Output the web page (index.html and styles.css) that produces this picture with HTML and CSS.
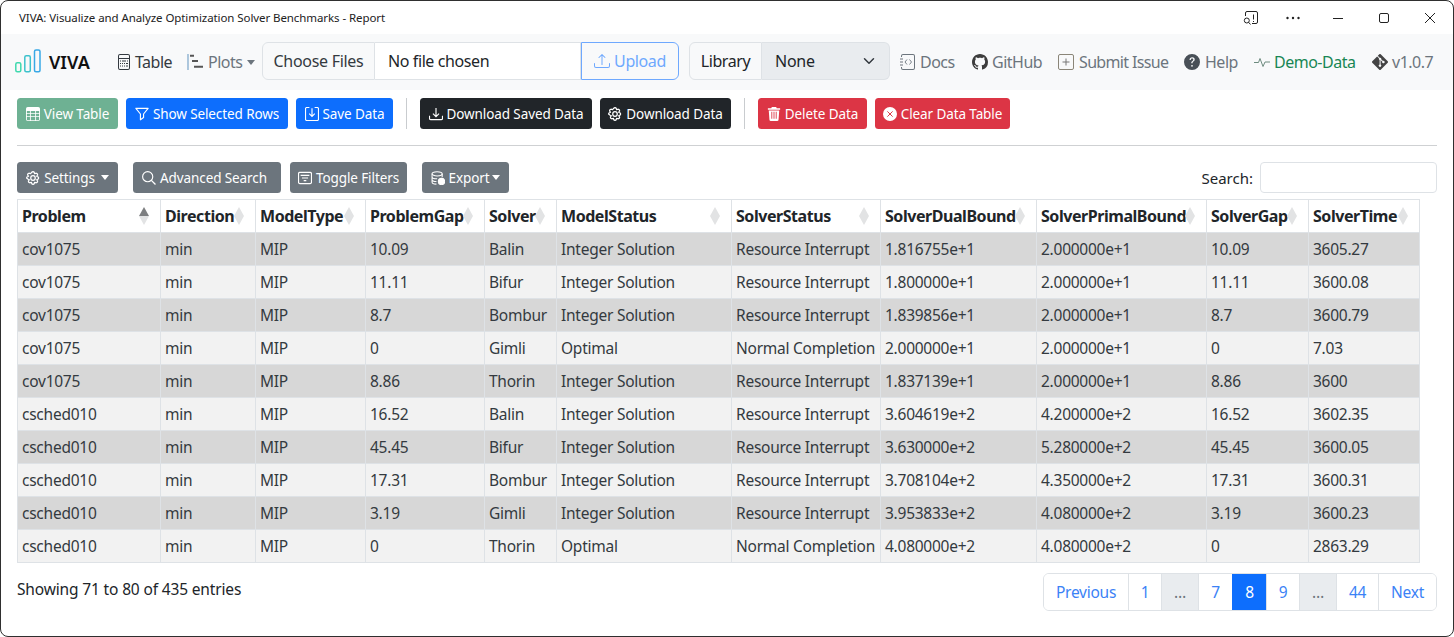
FILE: index.html
```html
<!DOCTYPE html>
<html lang="en">
<head>
<meta charset="utf-8">
<title>VIVA: Visualize and Analyze Optimization Solver Benchmarks - Report</title>
<link rel="stylesheet" href="styles.css">
</head>
<body>
<div class="window">
  <header class="titlebar">
    <span class="title">VIVA: Visualize and Analyze Optimization Solver Benchmarks - Report</span>
    <div class="winctl">
      <svg class="wc" viewBox="0 0 16 16" fill="none" stroke="#222" stroke-width="1"><path d="M2.5 6V3a1.5 1.5 0 0 1 1.5-1.5h9A1.5 1.5 0 0 1 14.500 3v9a1.500 1.500 0 0 1-1.500 1.500H9"/><path d="M10.500 4.500v5M10.500 11v1"/><circle cx="3.800" cy="10.500" r="2.500"/><path d="M5.600 12.300 7.500 14.500"/></svg>
      <svg class="wc" viewBox="0 0 16 16" fill="#222"><circle cx="2.500" cy="8" r="1.200"/><circle cx="8" cy="8" r="1.200"/><circle cx="13.500" cy="8" r="1.200"/></svg>
      <svg class="wc" viewBox="0 0 16 16" stroke="#222" fill="none"><path d="M3 8.500h10"/></svg>
      <svg class="wc" viewBox="0 0 16 16" stroke="#222" fill="none"><rect x="3.500" y="3.500" width="9" height="9" rx="1.500"/></svg>
      <svg class="wc" viewBox="0 0 16 16" stroke="#222" fill="none"><path d="M3 3l10 10M13 3 3 13"/></svg>
    </div>
  </header>

  <nav class="navbar">
    <a class="brand">
      <svg class="logo" viewBox="0 0 27 26" fill="none" stroke-width="1.500">
        <defs><linearGradient id="lg" x1="0" y1="0" x2="1" y2="0"><stop offset="0" stop-color="#3fe0a8"/><stop offset="1" stop-color="#35a4ea"/></linearGradient></defs>
        <rect x="1.800" y="13.800" width="5" height="9" rx="1.500" stroke="#3fd9ae"/>
        <rect x="10.800" y="6.800" width="5.500" height="16" rx="1.500" stroke="#3cc2cc"/>
        <rect x="20.500" y="1" width="5.500" height="21.800" rx="1.500" stroke="#38a8e6"/>
        <path d="M1 25.200h25.500" stroke="url(#lg)" stroke-width="1.600"/>
      </svg>
      <span class="brandname">VIVA</span>
    </a>
    <a class="navlink dark nav-table">
      <svg class="ic" viewBox="0 0 16 16" fill="currentColor"><path d="M4 0a2 2 0 0 0-2 2v12a2 2 0 0 0 2 2h8a2 2 0 0 0 2-2V2a2 2 0 0 0-2-2H4zm0 1h8a1 1 0 0 1 1 1v2H3V2a1 1 0 0 1 1-1zM3 5h10v9a1 1 0 0 1-1 1H4a1 1 0 0 1-1-1V5zm2 1.500H4v1h1zm1 0v1h4v-1zm5 0v1h1v-1zM4 9v1h1V9zm2 0v1h1V9zm2 0v1h1V9zm2 0v1h2V9zm-6 2.500v1h1v-1zm2 0v1h1v-1zm2 0v1h1v-1zm2 0v1h2v-1z"/></svg>
      Table
    </a>
    <a class="navlink muted nav-plots">
      <svg class="ic" viewBox="0 0 16 16"><path d="M1 0v16" stroke="#7ba4c9" stroke-width="1.200"/><path d="M3 1.700h4M5 7h6M7 12.800h9" stroke="#555" stroke-width="1.900"/></svg>
      Plots<span class="caret"></span>
    </a>
    <form class="filegroup">
      <span class="choose">Choose Files</span>
      <span class="nofile">No file chosen</span>
      <span class="upload">
        <svg class="ic" viewBox="0 0 16 16" fill="currentColor"><path d="M.5 9.900a.5.5 0 0 1 .5.500v2.500a1 1 0 0 0 1 1h12a1 1 0 0 0 1-1v-2.500a.5.5 0 0 1 1 0v2.500a2 2 0 0 1-2 2H2a2 2 0 0 1-2-2v-2.500a.5.5 0 0 1 .5-.5z"/><path d="M7.650 1.150a.5.5 0 0 1 .7 0l3 3a.5.5 0 0 1-.7.7L8.500 2.700V11.500a.5.5 0 0 1-1 0V2.700L5.350 4.850a.5.5 0 1 1-.7-.7l3-3z"/></svg>
        Upload
      </span>
    </form>
    <div class="libgroup">
      <span class="liblabel">Library</span>
      <span class="libselect">None
        <svg class="chev" viewBox="0 0 16 16" fill="none" stroke="#343a40" stroke-width="2" stroke-linecap="round" stroke-linejoin="round"><path d="m2 5 6 6 6-6"/></svg>
      </span>
    </div>
    <a class="navlink muted nav-docs">
      <svg class="ic" viewBox="0 0 16 16" fill="currentColor"><path d="M3 0h10a2 2 0 0 1 2 2v12a2 2 0 0 1-2 2H3a2 2 0 0 1-2-2v-1h1v1a1 1 0 0 0 1 1h10a1 1 0 0 0 1-1V2a1 1 0 0 0-1-1H3a1 1 0 0 0-1 1v1H1V2a2 2 0 0 1 2-2z"/><path d="M0 4.500h3v1H0zM0 7.500h3v1H0zM0 10.500h3v1H0z"/><path d="m7 5.500-2 2.500 2 2.500M9.500 5.500l2 2.500-2 2.500" fill="none" stroke="currentColor" stroke-width=".9"/></svg>
      Docs
    </a>
    <a class="navlink muted nav-gh">
      <svg class="ic" viewBox="0 0 16 16" fill="#3d3d3d"><path d="M8 0C3.580 0 0 3.580 0 8c0 3.540 2.290 6.530 5.470 7.590.4.070.55-.17.55-.38 0-.19-.01-.82-.01-1.490-2.010.37-2.530-.49-2.690-.94-.09-.23-.48-.94-.82-1.130-.28-.15-.68-.52-.01-.53.630-.01 1.080.58 1.230.82.720 1.210 1.870.87 2.330.66.070-.52.280-.87.510-1.070-1.780-.2-3.640-.89-3.640-3.950 0-.87.310-1.590.820-2.150-.08-.2-.36-1.020.08-2.120 0 0 .67-.21 2.200.82.640-.18 1.320-.27 2-.27.68 0 1.360.09 2 .27 1.530-1.040 2.200-.82 2.200-.82.440 1.100.16 1.920.08 2.120.51.560.82 1.270.82 2.150 0 3.070-1.870 3.750-3.650 3.950.290.250.540.730.540 1.480 0 1.070-.01 1.930-.01 2.200 0 .21.150.46.550.38A8.010 8.010 0 0 0 16 8c0-4.420-3.580-8-8-8z"/></svg>
      GitHub
    </a>
    <a class="navlink muted nav-issue">
      <svg class="ic" viewBox="0 0 16 16" fill="none" stroke="#777"><rect x=".5" y=".5" width="15" height="15" rx="1.500" stroke="#8a8578"/><path d="M8 4.500v7M4.500 8h7"/></svg>
      Submit Issue
    </a>
    <a class="navlink muted nav-help">
      <svg class="ic" viewBox="0 0 16 16" fill="#495057"><path d="M16 8A8 8 0 1 1 0 8a8 8 0 0 1 16 0zM5.500 5.900h1.300c.1-.8.600-1.300 1.300-1.300.7 0 1.200.4 1.200 1 0 .5-.2.800-.9 1.300-.8.500-1.100 1-1.100 1.800v.5h1.300v-.3c0-.6.200-.9.900-1.400.7-.500 1.200-1.100 1.200-2 0-1.300-1-2.200-2.500-2.200-1.600 0-2.600.9-2.700 2.600zM8 12.700a.9.900 0 1 0 0-1.800.9.900 0 0 0 0 1.800z" fill-rule="evenodd"/></svg>
      Help
    </a>
    <a class="navlink teal nav-demo">
      <svg class="ic" viewBox="0 0 16 16" fill="none" stroke="#6c8a7e" stroke-width="1"><path d="M0 8.500h4.500l1.500-4 3 8 2-4.500h5"/></svg>
      Demo-Data
    </a>
    <a class="navlink muted nav-ver">
      <svg class="ic" viewBox="0 0 16 16" fill="#444"><path d="M15.700 7.300 8.700.3a1 1 0 0 0-1.400 0L5.800 1.800l1.900 1.900a1.200 1.200 0 0 1 1.500 1.500l1.800 1.800a1.200 1.200 0 1 1-.7.700L8.600 6.100v4.500a1.200 1.200 0 1 1-1-.1V5.900a1.200 1.200 0 0 1-.6-1.600L5.100 2.500.3 7.300a1 1 0 0 0 0 1.400l7 7a1 1 0 0 0 1.400 0l7-7a1 1 0 0 0 0-1.400z"/></svg>
      v1.0.7
    </a>
  </nav>

  <main class="content">
    <div class="toolbar">
      <button class="btn green w-view"><svg class="bi" viewBox="0 0 16 16" fill="currentColor"><path d="M0 2a2 2 0 0 1 2-2h12a2 2 0 0 1 2 2v12a2 2 0 0 1-2 2H2a2 2 0 0 1-2-2V2zm1 2.500V7h3.500V4.500H1zm4.500 0V7h5V4.500h-5zm6 0V7H15V4.500h-3.500zM1 8v2.500h3.500V8H1zm4.500 0v2.500h5V8h-5zm6 0v2.500H15V8h-3.500zM1 11.500V14a1 1 0 0 0 1 1h2.500v-3.500H1zm4.500 0V15h5v-3.500h-5zm6 0V15H14a1 1 0 0 0 1-1v-2.500h-3.500z"/></svg>View Table</button>
      <button class="btn blue w-show"><svg class="bi" viewBox="0 0 16 16" fill="none" stroke="currentColor" stroke-width="1.300"><path d="M1 1.500h14l-5.200 6.500v4l-3.600 2.600V8z" stroke-linejoin="round"/></svg>Show Selected Rows</button>
      <button class="btn blue w-save"><svg class="bi" viewBox="0 0 16 16" fill="none" stroke="currentColor" stroke-width="1.300"><path d="M5 .6H2a1.400 1.400 0 0 0-1.400 1.400v12A1.400 1.400 0 0 0 2 15.400h12a1.400 1.400 0 0 0 1.400-1.400V2A1.400 1.400 0 0 0 14 .6h-3"/><path d="M8 1.500v9M4.800 7.500 8 10.700l3.200-3.200"/></svg>Save Data</button>
      <span class="vr"></span>
      <button class="btn black w-dsaved"><svg class="bi" viewBox="0 0 16 16" fill="none" stroke="currentColor" stroke-width="1.300"><path d="M.6 10v3a1.500 1.500 0 0 0 1.500 1.500h11.800a1.500 1.500 0 0 0 1.500-1.500v-3"/><path d="M8 1v10M4.500 7.500 8 11l3.500-3.500"/></svg>Download Saved Data</button>
      <button class="btn black w-ddata"><svg class="bi" viewBox="0 0 16 16" fill="none" stroke="currentColor" stroke-width="1.400"><circle cx="8" cy="8" r="2.600"/><path d="M6.700 1.300 8 .7l1.300.6.600 1.800 1.800-.6 1.200.7.400 1.300-1.100 1.500 1.800.8.400 1.200-.4 1.200-1.800.8 1.100 1.500-.4 1.300-1.200.7-1.800-.6-.6 1.800-1.300.6-1.300-.6-.6-1.800-1.800.6-1.200-.7-.4-1.300 1.100-1.500-1.800-.8L.7 8l.4-1.200 1.800-.8-1.100-1.500.4-1.300 1.200-.7 1.800.6z" stroke-linejoin="round"/></svg>Download Data</button>
      <span class="vr"></span>
      <button class="btn red w-del"><svg class="bi" viewBox="0 0 16 16" fill="currentColor"><path d="M5.500 0h5l.6 1.500H15V3H1V1.500h3.900zM2 4h12l-.8 10.500A1.600 1.600 0 0 1 11.600 16H4.400a1.600 1.600 0 0 1-1.600-1.500zm3 1.500v8h1v-8zm2.500 0v8h1v-8zm2.500 0v8h1v-8z"/></svg>Delete Data</button>
      <button class="btn red w-clear"><svg class="bi" viewBox="0 0 16 16"><circle cx="8" cy="8" r="8" fill="#fff"/><path d="M5 5l6 6M11 5l-6 6" stroke="#dc3545" stroke-width="1.100"/></svg>Clear Data Table</button>
    </div>

    <hr class="rule">

    <div class="dtbar">
      <button class="btn gray w-set"><svg class="bi" viewBox="0 0 16 16" fill="none" stroke="currentColor" stroke-width="1.400"><circle cx="8" cy="8" r="2.600"/><path d="M6.700 1.300 8 .7l1.300.6.600 1.800 1.800-.6 1.200.7.400 1.300-1.100 1.500 1.800.8.400 1.200-.4 1.200-1.800.8 1.100 1.500-.4 1.300-1.200.7-1.800-.6-.6 1.800-1.300.6-1.300-.6-.6-1.800-1.800.6-1.200-.7-.4-1.300 1.100-1.500-1.800-.8L.7 8l.4-1.200 1.800-.8-1.100-1.500.4-1.300 1.200-.7 1.800.6z" stroke-linejoin="round"/></svg>Settings<span class="caret"></span></button>
      <button class="btn gray w-adv"><svg class="bi" viewBox="0 0 16 16" fill="none" stroke="currentColor" stroke-width="1.300"><circle cx="6.500" cy="6.500" r="5.800"/><path d="m10.700 10.700 4.700 4.700" stroke-width="1.500"/></svg>Advanced Search</button>
      <button class="btn gray w-tog"><svg class="bi" viewBox="0 0 16 16" fill="none" stroke="currentColor" stroke-width="1.300"><rect x=".6" y="1.600" width="14.800" height="12.800" rx="1.500"/><path d="M3 5h10M4.500 8h7M6.500 11h3"/></svg>Toggle Filters</button>
      <button class="btn gray w-exp"><svg class="bi" viewBox="0 0 16 16" fill="none" stroke="currentColor" stroke-width="1.200"><ellipse cx="7" cy="3.200" rx="5.800" ry="2.400"/><path d="M1.200 3.200v9.400c0 1.300 2.500 2.400 5 2.400M12.800 3.200V7M1.200 6.500c0 1.300 2.600 2.400 5.800 2.400M1.200 9.700c0 1.300 2.500 2.300 5 2.300"/><circle cx="12" cy="12" r="3.600" fill="currentColor"/></svg>Export<span class="caret tight"></span></button>
      <label class="search">Search:<input class="searchbox" type="text"></label>
    </div>

    <table class="data">
      <colgroup>
        <col class="c1"><col class="c2"><col class="c3"><col class="c4"><col class="c5"><col class="c6"><col class="c7"><col class="c8"><col class="c9"><col class="c10"><col class="c11">
      </colgroup>
      <thead>
        <tr><th class="asc">Problem</th><th>Direction</th><th>ModelType</th><th>ProblemGap</th><th>Solver</th><th>ModelStatus</th><th>SolverStatus</th><th>SolverDualBound</th><th>SolverPrimalBound</th><th>SolverGap</th><th>SolverTime</th></tr>
      </thead>
      <tbody>
        <tr><td>cov1075</td><td>min</td><td>MIP</td><td>10.09</td><td>Balin</td><td>Integer Solution</td><td>Resource Interrupt</td><td>1.816755e+1</td><td>2.000000e+1</td><td>10.09</td><td>3605.27</td></tr>
        <tr><td>cov1075</td><td>min</td><td>MIP</td><td>11.11</td><td>Bifur</td><td>Integer Solution</td><td>Resource Interrupt</td><td>1.800000e+1</td><td>2.000000e+1</td><td>11.11</td><td>3600.08</td></tr>
        <tr><td>cov1075</td><td>min</td><td>MIP</td><td>8.7</td><td>Bombur</td><td>Integer Solution</td><td>Resource Interrupt</td><td>1.839856e+1</td><td>2.000000e+1</td><td>8.7</td><td>3600.79</td></tr>
        <tr><td>cov1075</td><td>min</td><td>MIP</td><td>0</td><td>Gimli</td><td>Optimal</td><td>Normal Completion</td><td>2.000000e+1</td><td>2.000000e+1</td><td>0</td><td>7.03</td></tr>
        <tr><td>cov1075</td><td>min</td><td>MIP</td><td>8.86</td><td>Thorin</td><td>Integer Solution</td><td>Resource Interrupt</td><td>1.837139e+1</td><td>2.000000e+1</td><td>8.86</td><td>3600</td></tr>
        <tr><td>csched010</td><td>min</td><td>MIP</td><td>16.52</td><td>Balin</td><td>Integer Solution</td><td>Resource Interrupt</td><td>3.604619e+2</td><td>4.200000e+2</td><td>16.52</td><td>3602.35</td></tr>
        <tr><td>csched010</td><td>min</td><td>MIP</td><td>45.45</td><td>Bifur</td><td>Integer Solution</td><td>Resource Interrupt</td><td>3.630000e+2</td><td>5.280000e+2</td><td>45.45</td><td>3600.05</td></tr>
        <tr><td>csched010</td><td>min</td><td>MIP</td><td>17.31</td><td>Bombur</td><td>Integer Solution</td><td>Resource Interrupt</td><td>3.708104e+2</td><td>4.350000e+2</td><td>17.31</td><td>3600.31</td></tr>
        <tr><td>csched010</td><td>min</td><td>MIP</td><td>3.19</td><td>Gimli</td><td>Integer Solution</td><td>Resource Interrupt</td><td>3.953833e+2</td><td>4.080000e+2</td><td>3.19</td><td>3600.23</td></tr>
        <tr><td>csched010</td><td>min</td><td>MIP</td><td>0</td><td>Thorin</td><td>Optimal</td><td>Normal Completion</td><td>4.080000e+2</td><td>4.080000e+2</td><td>0</td><td>2863.29</td></tr>
      </tbody>
    </table>

    <div class="dtfoot">
      <div class="info">Showing 71 to 80 of 435 entries</div>
      <ul class="pager">
        <li class="p-prev">Previous</li><li class="p-1">1</li><li class="p-dots">…</li><li class="p-7">7</li><li class="p-7 on">8</li><li class="p-1">9</li><li class="p-dots">…</li><li class="p-44">44</li><li class="p-next">Next</li>
      </ul>
    </div>
  </main>
</div>
</body>
</html>
```
FILE: styles.css
```css
* { box-sizing: border-box; }
html, body { margin: 0; padding: 0; background: #fff; }
body {
  font-family: "Noto Sans", "Open Sans", "Liberation Sans", sans-serif;
  font-size: 16px;
  color: #212529;
  letter-spacing: -0.25px;
}
.window {
  width: 1454px;
  height: 637px;
  border: 1px solid #2f2f2f;
  border-radius: 8px;
  overflow: hidden;
  background: #fff;
}
.titlebar {
  height: 33px;
  display: flex;
  align-items: center;
  justify-content: space-between;
  padding-left: 18px;
}
.title { font-size: 11.5px; letter-spacing: -0.08px; color: #222; }
.winctl { display: flex; align-items: center; gap: 26px; padding-right: 15px; }
.wc { width: 16px; height: 16px; display: block; }
.winctl .wc:nth-child(n+3) { margin-left: 4px; }
.winctl .wc:nth-child(3) { margin-left: 3px; }

.navbar {
  height: 56px;
  background: #f8f9fa;
  display: flex;
  align-items: center;
  padding-left: 13px;
}
.brand { display: flex; align-items: center; width: 102px; }
.logo { width: 27px; height: 26px; margin-right: 8px; }
.brandname { font-size: 18px; font-weight: 600; color: #111; letter-spacing: 0; }
.navlink { display: flex; align-items: center; height: 24px; white-space: nowrap; letter-spacing: -0.5px; }
.ic { width: 16px; height: 16px; margin-right: 4px; flex: none; }
.dark { color: #343a40; }
.muted { color: #6c757d; }
.teal { color: #198754; }
.nav-table { width: 71px; }
.nav-table .ic { margin-right: 3px; }
.nav-plots { width: 75px; }
.nav-plots .ic { margin-right: 5px; }
.caret {
  display: inline-block;
  margin-left: 5px;
  border-top: 5px solid currentColor;
  border-left: 4px solid transparent;
  border-right: 4px solid transparent;
}
.caret.tight { margin-left: 3px; }
.filegroup {
  display: flex;
  width: 417px;
  height: 38px;
  margin: 0 0 2px;
  background: #fff;
  border-radius: 6px;
}
.choose, .nofile, .liblabel, .libselect { padding-bottom: 1px; }
.choose {
  width: 113px;
  background: #f8f9fa;
  border: 1px solid #dee2e6;
  border-radius: 6px 0 0 6px;
  display: flex; align-items: center; justify-content: center;
  color: #343a40;
  letter-spacing: -0.3px;
}
.nofile {
  width: 206px;
  border: 1px solid #dee2e6;
  border-left: 0;
  display: flex; align-items: center;
  padding-left: 13px;
  color: #212529;
  letter-spacing: -0.4px;
}
.upload {
  width: 98px;
  background: #f8f9fa;
  border: 1px solid #6ea8fe;
  border-radius: 0 6px 6px 0;
  display: flex; align-items: center; justify-content: center;
  color: #6ea8fe;
  letter-spacing: -0.4px;
}
.libgroup { display: flex; width: 201px; height: 38px; margin: 0 10px 2px; }
.liblabel {
  width: 73px;
  background: #f8f9fa;
  border: 1px solid #dee2e6;
  border-radius: 6px 0 0 6px;
  display: flex; align-items: center; justify-content: center;
  letter-spacing: -0.4px;
}
.libselect {
  width: 128px;
  background: #e9ecef;
  border: 1px solid #dee2e6;
  border-left: 0;
  border-radius: 0 6px 6px 0;
  display: flex; align-items: center; justify-content: space-between;
  padding: 0 14px 1px 13px;
}
.chev { width: 12px; height: 12px; }
.nav-docs { width: 72px; }
.nav-gh { width: 86px; }
.nav-issue { width: 126px; letter-spacing: -0.65px; }
.nav-issue .ic, .nav-help .ic { margin-right: 5px; }
.nav-help { width: 70px; }
.nav-demo { width: 118px; }
.nav-ver { width: 64px; }

.content { padding: 8px 16px 0; }
.toolbar { display: flex; align-items: center; height: 31px; }
.btn {
  display: inline-flex;
  align-items: center;
  justify-content: center;
  height: 31px;
  padding: 0;
  border: 0;
  border-radius: 3.500px;
  font-family: inherit;
  font-size: 13.500px;
  letter-spacing: -0.1px;
  color: #fff;
  white-space: nowrap;
  margin-right: 8px;
}
.bi { width: 14px; height: 14px; margin-right: 4px; flex: none; }
.green { background: #6eb193; }
.blue { background: #0d6efd; }
.black { background: #212529; }
.red { background: #dc3545; }
.gray { background: #6c757d; }
.w-view { width: 101px; }
.w-show { width: 162px; }
.w-save { width: 97px; margin-right: 13px; }
.w-dsaved { width: 172px; }
.w-ddata { width: 131px; margin-right: 13px; }
.w-del { width: 109px; }
.w-clear { width: 135px; }
.vr { width: 1px; height: 31px; background: #c9cccf; margin-right: 13px; }
.rule { height: 1px; border: 0; background: #cfd1d3; margin: 16px 0; }
.dtbar { display: flex; align-items: center; height: 31px; margin-bottom: 6px; }
.w-set { width: 101px; margin-right: 15px; }
.w-set .caret { margin-left: 6px; }
.w-adv { width: 148px; margin-right: 9px; padding-right: 5px; }
.w-tog { width: 117px; margin-right: 15px; }
.w-exp { width: 87px; margin-right: 0; }
.search { margin-left: auto; display: flex; align-items: center; font-size: 15px; letter-spacing: 0; }
.searchbox {
  width: 177px; height: 31px; margin-left: 7px;
  border: 1px solid #dee2e6; border-radius: 4px; background: #fff;
}

.data {
  width: 1403px;
  border-collapse: collapse;
  table-layout: fixed;
}
.c1 { width: 143px; } .c2 { width: 95px; } .c3 { width: 110px; } .c4 { width: 119px; }
.c5 { width: 72px; } .c6 { width: 175px; } .c7 { width: 149px; } .c8 { width: 156px; }
.c9 { width: 170px; } .c10 { width: 102px; } .c11 { width: 111px; }
.data th, .data td {
  height: 33px;
  padding: 0 4px;
  border: 1px solid #dee2e6;
  text-align: left;
  white-space: nowrap;
  overflow: hidden;
}
.data th {
  position: relative;
  font-weight: 700;
  font-size: 16px;
  letter-spacing: -0.45px;
  color: #212529;
}
.data th::before, .data th::after {
  content: "";
  position: absolute;
  right: 11px;
  border-left: 5px solid transparent;
  border-right: 5px solid transparent;
}
.data th::before { top: 7px; border-bottom: 9px solid #e2e3e4; }
.data th::after { top: 16px; border-top: 9px solid #e2e3e4; }
.data th.asc::before { border-bottom-color: #7d7f81; }
.data td { color: #343a40; font-size: 15.500px; }
.data tbody tr:nth-child(odd) td { background: #d7d7d7; }
.data tbody tr:nth-child(even) td { background: #f2f2f2; }

.dtfoot { display: flex; justify-content: space-between; align-items: flex-start; margin-top: 10px; }
.info { padding-top: 5px; font-size: 15.500px; letter-spacing: -0.15px; }
.pager {
  display: flex; list-style: none; margin: 0; padding: 0; height: 38px;
  border: 1px solid #dee2e6;
  border-radius: 6px;
  overflow: hidden;
}
.pager li {
  display: flex; align-items: center; justify-content: center;
  border-left: 1px solid #dee2e6;
  font-size: 15.500px;
  color: #3b82f6;
  background: #fff;
}
.pager li:first-child { border-left: 0; }
.p-prev { width: 84px; }
.p-1 { width: 33px; }
.p-7 { width: 34px; }
.pager li.p-dots { width: 37px; background: #e9ecef; color: #6c757d; }
.p-44 { width: 42px; }
.p-next { width: 58px; }
.pager li.on { background: #0d6efd; color: #fff; border-left-color: #0d6efd; }
```
